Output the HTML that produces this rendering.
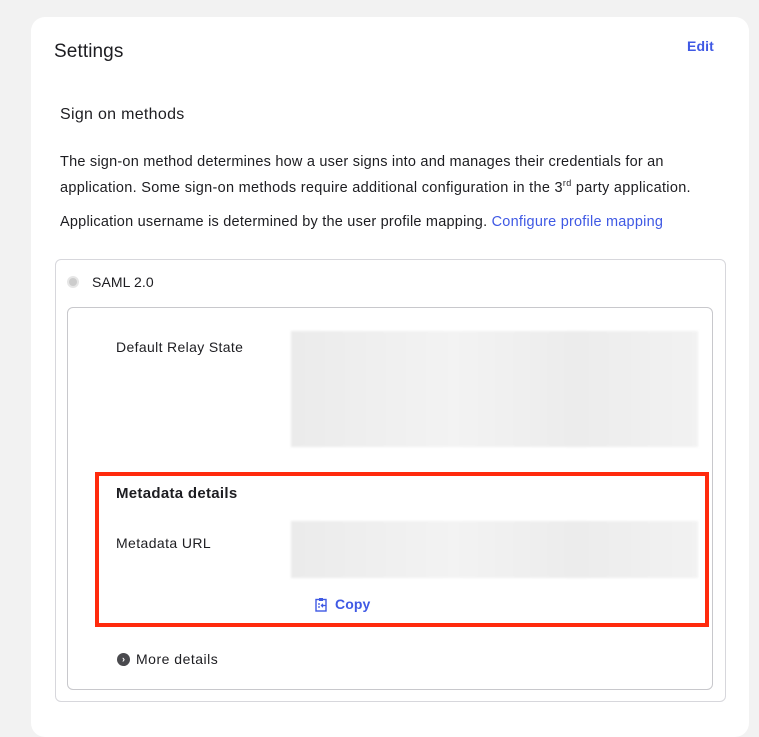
<!DOCTYPE html>
<html><head><meta charset="utf-8"><style>
*{box-sizing:border-box;margin:0;padding:0}
body{width:759px;height:713px;background:#f2f2f2;font-family:"Liberation Sans",sans-serif;color:#1d1d21;position:relative;overflow:hidden;font-size:14px;letter-spacing:0.1px}
.a{position:absolute;white-space:nowrap}
.card{position:absolute;left:31px;top:17px;width:718px;height:720px;background:#fff;border-radius:14px}
.blur{position:absolute;background:linear-gradient(90deg,#ebebeb,#f3f3f3 40%,#ececec 70%,#f2f2f2);filter:blur(1px)}
.p{font-size:14.5px;letter-spacing:0.22px}
</style></head><body>
<div class="card"></div>
<div class="a" style="left:54px;top:41px;font-size:19px">Settings</div>
<div class="a" style="left:687px;top:38px;font-size:14px;color:#3f59e4;font-weight:bold">Edit</div>
<div class="a" style="left:60px;top:106px;font-size:16px;letter-spacing:0.3px">Sign on methods</div>
<div class="a p" style="left:60px;top:154px">The sign-on method determines how a user signs into and manages their credentials for an</div>
<div class="a p" style="left:60px;top:178px;letter-spacing:0.3px">application. Some sign-on methods require additional configuration in the 3<sup style="font-size:9px">rd</sup> party application.</div>
<div class="a p" style="left:60px;top:214px">Application username is determined by the user profile mapping. <span style="color:#3f59e4">Configure profile mapping</span></div>
<div class="a" style="left:55px;top:259px;width:671px;height:443px;border:1px solid #d7d7dc;border-radius:6px"></div>
<div class="a" style="left:67px;top:276px;width:12px;height:12px;border-radius:50%;background:#ccc;border:2px solid #e6e6e6"></div>
<div class="a" style="left:92px;top:274px">SAML 2.0</div>
<div class="a" style="left:67px;top:307px;width:646px;height:383px;border:1px solid #c8c8cc;border-radius:6px"></div>
<div class="a" style="left:116px;top:339px;letter-spacing:0.35px">Default Relay State</div>
<div class="blur" style="left:291px;top:331px;width:407px;height:116px"></div>
<div class="a" style="left:95px;top:472px;width:614px;height:155px;border:4px solid #ff2a0d"></div>
<div class="a" style="left:116px;top:485px;font-size:15px;font-weight:bold;letter-spacing:0.3px">Metadata details</div>
<div class="a" style="left:116px;top:535px;letter-spacing:0.4px">Metadata URL</div>
<div class="blur" style="left:291px;top:521px;width:407px;height:57px"></div>
<svg class="a" style="left:315px;top:597px" width="13" height="15" viewBox="0 0 13 15"><rect x="1" y="2.5" width="10" height="11.5" fill="none" stroke="#3f59e4" stroke-width="1.4"/><rect x="4" y="1" width="4" height="3" fill="#3f59e4"/><path d="M3 7h2M3 10h2M11 8.5H6.5M8 6.8l-1.6 1.7L8 10.2" stroke="#3f59e4" stroke-width="1.2" fill="none"/></svg>
<div class="a" style="left:335px;top:596px;color:#3f59e4;font-weight:bold">Copy</div>
<div class="a" style="left:117px;top:653px;width:13px;height:13px;border-radius:50%;background:#4a4a4e;color:#fff;font-size:9px;line-height:13px;text-align:center;font-weight:bold;letter-spacing:0">›</div>
<div class="a" style="left:136px;top:651px;letter-spacing:0.5px">More details</div>
</body></html>
